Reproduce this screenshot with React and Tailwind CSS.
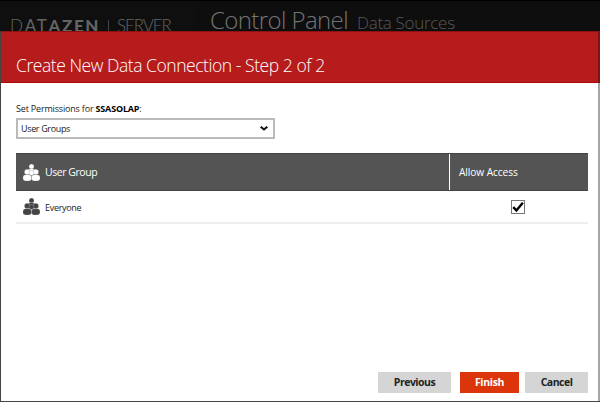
function GroupIcon({ className, gap }) {
  return (
    <svg viewBox="0 0 17 17" className={className} fill="currentColor" stroke={gap} strokeWidth="0.2">
      <circle cx="8.5" cy="2.6" r="2.5" />
      <ellipse cx="8.5" cy="7.4" rx="3.4" ry="3" />
      <circle cx="4.2" cy="8" r="2.8" />
      <circle cx="12.8" cy="8" r="2.8" />
      <circle cx="8.5" cy="9" r="2.5" />
      <rect x="0" y="10.7" width="8.5" height="6.2" rx="2.7" />
      <rect x="8.5" y="10.7" width="8.5" height="6.2" rx="2.7" />
    </svg>
  );
}

function Header() {
  return (
    <header className="flex h-[31px] overflow-hidden border-t border-black bg-[#0e0e0e] whitespace-nowrap">
      <div className="flex w-[196px] shrink-0 items-start bg-[#0f0f0f] pt-[15px] pl-[10px] font-['Lato',sans-serif] text-[17px] leading-[20px] text-[#646464]">
        <span className="w-[88px] tracking-[1.7px]">
          <span className="font-light">D</span>
          <span className="font-normal">AT</span>
          <span className="font-bold">A</span>
          <span className="font-black">ZEN</span>
        </span>
        <span className="mt-[4px] ml-[10px] h-4 w-px bg-[#444]" />
        <span className="ml-[8px] font-light tracking-[-1.1px]">SERVER</span>
      </div>
      <div className="flex items-baseline pl-[14px] font-['Open_Sans','Noto_Sans',sans-serif] font-light leading-[37px]">
        <span className="w-[147px] text-[24px] tracking-[-0.6px] text-[#747474]">Control Panel</span>
        <span className="text-[17px] tracking-[-0.3px] text-[#585858]">Data Sources</span>
      </div>
    </header>
  );
}

export default function App() {
  return (
    <div className="flex h-[402px] w-[600px] flex-col overflow-hidden bg-white font-['Open_Sans','Noto_Sans',sans-serif] text-[#222]">
      <Header />
      <div className="flex h-[371px] flex-col border-b border-l border-[#444]">
        <div className="flex h-[52px] shrink-0">
          <h1 className="flex-1 border-t border-b border-t-[#8e1212] border-b-[#b00707] bg-[#b71c1c] pt-[19px] pl-[15px] text-[17.5px] leading-[28px] font-light tracking-[-0.45px] whitespace-nowrap text-white">
            Create New Data Connection - Step 2 of 2
          </h1>
          <div className="w-[2px] bg-[#7d1515]" />
        </div>
        <main className="flex min-h-0 flex-1 flex-col border-r-2 border-[#a6a6a6] pr-[10px] pl-[15px]">
          <p className="mt-[17px] h-[18px] text-[9px] leading-[18px] tracking-[-0.18px] whitespace-nowrap">
            Set Permissions for <b className="text-black">SSASOLAP</b>:
          </p>
          <div className="flex h-[21px] w-[259px] shrink-0 items-center justify-between border-2 border-[#bababa] pr-[5px] pl-[3px] text-[9px] tracking-[-0.35px]">
            <span className="pt-px">User Groups</span>
            <svg viewBox="0 0 8 5" className="h-[5px] w-2" fill="none" stroke="#111" strokeWidth="2">
              <path d="M0.7 0.7 4 3.5 7.3 0.7" />
            </svg>
          </div>
          <div className="mt-[14px] flex h-[38px] w-[572px] shrink-0 border-y border-[#444] bg-[#545454] text-white">
            <div className="flex w-[434px] items-center border-r border-white pl-[7px]">
              <GroupIcon className="h-[17px] w-[17px]" gap="#545454" />
              <span className="ml-[5px] pt-[2px] text-[10.5px] tracking-[-0.45px]">User Group</span>
            </div>
            <div className="flex items-center pt-[2px] pl-[9px] text-[10.2px] tracking-[-0.1px]">Allow Access</div>
          </div>
          <div className="flex h-[33px] w-[572px] shrink-0 items-center border-b-2 border-[#efefef] pl-[7px]">
            <GroupIcon className="h-[17px] w-[17px] text-[#444]" gap="#fff" />
            <span className="ml-[5px] flex-1 pt-[2px] text-[9px] tracking-[-0.3px]">Everyone</span>
            <span className="mr-[63px] flex h-[14px] w-[14px] items-center justify-center border border-[#777]">
              <svg viewBox="0 0 12 12" className="h-3 w-3" fill="none" stroke="#000" strokeWidth="2.4">
                <path d="M1.2 6.2 4.4 9.4 10.8 1.8" />
              </svg>
            </span>
          </div>
          <footer className="mt-auto mb-[8px] flex h-[21px] text-[10.5px] font-bold tracking-[-0.5px]">
            <button className="ml-[362px] w-[73px] bg-[#d5d5d5]">Previous</button>
            <button className="ml-[9px] w-[59px] bg-[#dd350b] tracking-[-0.35px] text-white">Finish</button>
            <button className="ml-[6px] w-[63px] bg-[#d5d5d5]">Cancel</button>
          </footer>
        </main>
      </div>
    </div>
  );
}
